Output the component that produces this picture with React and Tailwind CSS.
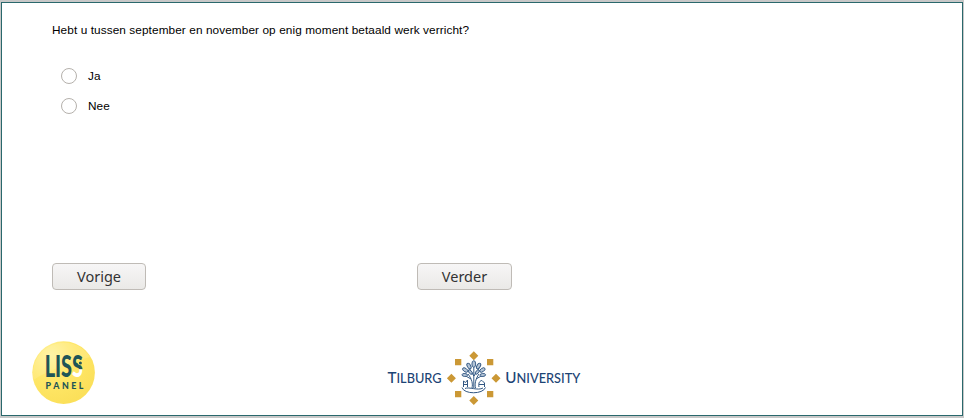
const OPTIONS = ["Ja", "Nee"];

function RadioOption({ label }) {
  return (
    <label className="flex h-[30px] items-center text-[11.8px] tracking-[0.09px]">
      <input
        type="radio"
        name="work"
        className="h-4 w-4 appearance-none rounded-full border border-[#b5b1ac] bg-white"
      />
      <span className="ml-[11px] pt-px">{label}</span>
    </label>
  );
}

function NavButton({ children, className }) {
  return (
    <button
      className={`h-[27px] rounded-[4px] border border-[#bfbbb6] bg-linear-to-b from-[#f7f6f6] to-[#eae9e7] font-['Noto_Sans',sans-serif] text-[14.5px] leading-none text-[#333333] ${className}`}
    >
      {children}
    </button>
  );
}

function LissLogo() {
  return (
    <svg width="64" height="65" viewBox="0 0 64 65" fontFamily="Lato, sans-serif" fill="#1f5557">
      <defs>
        <radialGradient id="sun" cx="0.3" cy="0.22" r="0.8">
          <stop offset="0" stopColor="#fff29c" />
          <stop offset="0.5" stopColor="#ffe768" />
          <stop offset="1" stopColor="#fbe05a" />
        </radialGradient>
        <linearGradient id="split" gradientUnits="userSpaceOnUse" x1="0" y1="16" x2="0" y2="38">
          <stop offset="0.58" stopColor="#1f5557" />
          <stop offset="0.62" stopColor="#ffffff" />
        </linearGradient>
      </defs>
      <circle cx="31.6" cy="32.6" r="31.3" fill="url(#sun)" />
      <path d="M1.500 40A31 31 0 0 1 58 17C40 22 16 30 1.500 40Z" fill="#fffbd8" opacity="0.18" />
      <text x="12.700" y="37.300" fontSize="29.500" fontWeight="900" textLength="38.300" lengthAdjust="spacingAndGlyphs">
        LIS<tspan fill="url(#split)">S</tspan>
      </text>
      <circle cx="48.400" cy="22.900" r="2.400" fill="#ffe768" />
      <circle cx="48.400" cy="22.900" r="1.500" />
      <text x="13.600" y="49.200" fontSize="8.800" fontWeight="900" textLength="37.800">
        PANEL
      </text>
    </svg>
  );
}

function TilburgLogo() {
  return (
    <svg width="196" height="54" viewBox="386 351 196 54" fontFamily="Lato, sans-serif" fill="#1c4475">
      <text x="387.5" y="382.600" fontSize="15.5" fontWeight="500" textLength="54" lengthAdjust="spacingAndGlyphs">
        T<tspan fontSize="13">ILBURG</tspan>
      </text>
      <text x="505.300" y="382.600" fontSize="15.5" fontWeight="500" textLength="75" lengthAdjust="spacingAndGlyphs">
        U<tspan fontSize="13">NIVERSITY</tspan>
      </text>
      <g fill="#cb9835">
        <path d="M473.8 351.2l4.5 4.5-4.5 4.5-4.5-4.5zM473.8 395.9l4.5 4.5-4.5 4.5-4.5-4.5zM451.4 373.7l4.5 4.5-4.5 4.5-4.5-4.5zM496 373.7l4.5 4.5-4.5 4.5-4.5-4.5z" />
        <path d="M455 359h6.3v6.3H455zM487 359h6.3v6.3H487zM455 391h6.3v6.3H455zM487 391h6.3v6.3H487z" />
      </g>
      <g fill="none" stroke="#315783" strokeWidth="1">
        <path d="M472 388C473 384 472 379 468 374M475.500 388C474.500 384 475.500 379 479 374M473.800 388V366" />
        <path d="M473.800 376L469 368M474 376L479 368M471 379L464 375M476 379L483 375" />
        <path d="M462 387.500C464 394.500 483 394.500 485.500 387.500M465 388.500C469 386.500 478 391 483 388" />
        <path d="M463.500 387V381L465.500 382.500L467.500 380V387M479 387C478 383 480 380.500 482 380.500L484.500 383V387M464 384.500H468M479 384.500H484" />
      </g>
      <g fill="#b4c4d6" stroke="#315783" strokeWidth="0.9">
        <ellipse cx="473.800" cy="364" rx="1.900" ry="3.300" />
        <ellipse cx="469" cy="366" rx="1.700" ry="3.100" transform="rotate(-30 469 366)" />
        <ellipse cx="478.600" cy="366" rx="1.700" ry="3.100" transform="rotate(30 478.600 366)" />
        <ellipse cx="465.200" cy="370" rx="1.700" ry="3" transform="rotate(-55 465.200 370)" />
        <ellipse cx="482.400" cy="370" rx="1.700" ry="3" transform="rotate(55 482.400 370)" />
        <ellipse cx="464.800" cy="375" rx="1.500" ry="2.800" transform="rotate(-85 464.800 375)" />
        <ellipse cx="482.800" cy="375" rx="1.500" ry="2.800" transform="rotate(85 482.800 375)" />
        <ellipse cx="470.300" cy="372" rx="1.400" ry="2.700" transform="rotate(-40 470.300 372)" />
        <ellipse cx="477.300" cy="372" rx="1.400" ry="2.700" transform="rotate(40 477.300 372)" />
      </g>
    </svg>
  );
}

export default function App() {
  return (
    <div className="h-[418px] w-[964px] bg-[#c8c8c8] px-px py-0.5 font-['Liberation_Sans',Arial,sans-serif] text-black">
      <main className="flex h-[414px] flex-col border border-[#2a686c] bg-white">
        <p className="mt-[19px] ml-[50px] h-4 text-[11.8px] leading-4 tracking-[0.09px] whitespace-nowrap">
          Hebt u tussen september en november op enig moment betaald werk verricht?
        </p>
        <div className="mt-[23px] ml-[59px] flex flex-col">
          {OPTIONS.map((label) => (
            <RadioOption key={label} label={label} />
          ))}
        </div>
        <div className="mt-[142px] ml-[50px] flex gap-[271px]">
          <NavButton className="w-[94px]">Vorige</NavButton>
          <NavButton className="w-[95px]">Verder</NavButton>
        </div>
        <footer className="mt-[50px] ml-[30px] flex items-start gap-[290px]">
          <LissLogo />
          <div className="mt-[11px]">
            <TilburgLogo />
          </div>
        </footer>
      </main>
    </div>
  );
}
